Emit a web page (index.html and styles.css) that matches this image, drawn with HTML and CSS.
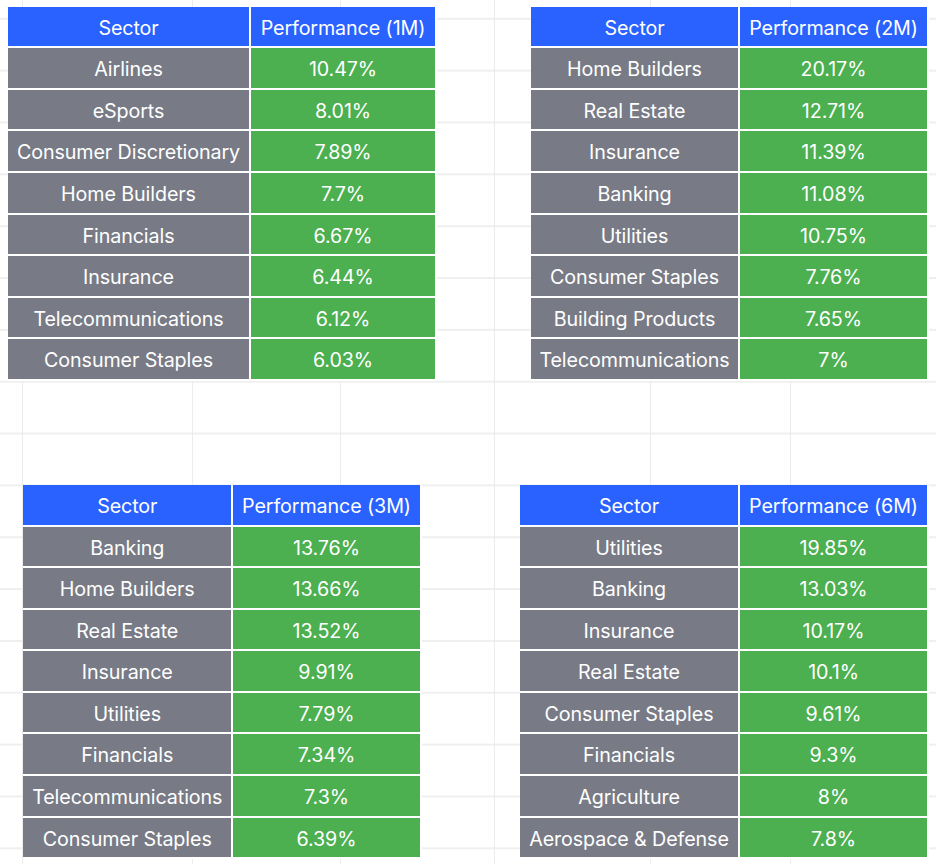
FILE: index.html
```html
<!DOCTYPE html>
<html lang="en">
<head>
<meta charset="utf-8">
<title>Sector Performance</title>
<link rel="stylesheet" href="styles.css">
</head>
<body>
<main class="board">
  <table class="perf t1">
    <colgroup><col class="c1"><col class="c2"></colgroup>
    <thead><tr><th>Sector</th><th>Performance (1M)</th></tr></thead>
    <tbody>
      <tr><td>Airlines</td><td>10.47%</td></tr>
      <tr><td>eSports</td><td>8.01%</td></tr>
      <tr><td>Consumer Discretionary</td><td>7.89%</td></tr>
      <tr><td>Home Builders</td><td>7.7%</td></tr>
      <tr><td>Financials</td><td>6.67%</td></tr>
      <tr><td>Insurance</td><td>6.44%</td></tr>
      <tr><td>Telecommunications</td><td>6.12%</td></tr>
      <tr><td>Consumer Staples</td><td>6.03%</td></tr>
    </tbody>
  </table>

  <table class="perf t2">
    <colgroup><col class="c1"><col class="c2"></colgroup>
    <thead><tr><th>Sector</th><th>Performance (2M)</th></tr></thead>
    <tbody>
      <tr><td>Home Builders</td><td>20.17%</td></tr>
      <tr><td>Real Estate</td><td>12.71%</td></tr>
      <tr><td>Insurance</td><td>11.39%</td></tr>
      <tr><td>Banking</td><td>11.08%</td></tr>
      <tr><td>Utilities</td><td>10.75%</td></tr>
      <tr><td>Consumer Staples</td><td>7.76%</td></tr>
      <tr><td>Building Products</td><td>7.65%</td></tr>
      <tr><td>Telecommunications</td><td>7%</td></tr>
    </tbody>
  </table>

  <table class="perf t3">
    <colgroup><col class="c1"><col class="c2"></colgroup>
    <thead><tr><th>Sector</th><th>Performance (3M)</th></tr></thead>
    <tbody>
      <tr><td>Banking</td><td>13.76%</td></tr>
      <tr><td>Home Builders</td><td>13.66%</td></tr>
      <tr><td>Real Estate</td><td>13.52%</td></tr>
      <tr><td>Insurance</td><td>9.91%</td></tr>
      <tr><td>Utilities</td><td>7.79%</td></tr>
      <tr><td>Financials</td><td>7.34%</td></tr>
      <tr><td>Telecommunications</td><td>7.3%</td></tr>
      <tr><td>Consumer Staples</td><td>6.39%</td></tr>
    </tbody>
  </table>

  <table class="perf t4">
    <colgroup><col class="c1"><col class="c2"></colgroup>
    <thead><tr><th>Sector</th><th>Performance (6M)</th></tr></thead>
    <tbody>
      <tr><td>Utilities</td><td>19.85%</td></tr>
      <tr><td>Banking</td><td>13.03%</td></tr>
      <tr><td>Insurance</td><td>10.17%</td></tr>
      <tr><td>Real Estate</td><td>10.1%</td></tr>
      <tr><td>Consumer Staples</td><td>9.61%</td></tr>
      <tr><td>Financials</td><td>9.3%</td></tr>
      <tr><td>Agriculture</td><td>8%</td></tr>
      <tr><td>Aerospace &amp; Defense</td><td>7.8%</td></tr>
    </tbody>
  </table>
</main>
</body>
</html>
```

FILE: styles.css
```css
html, body {
  margin: 0;
  padding: 0;
}

body {
  width: 936px;
  min-height: 864px;
  background-color: #ffffff;
  background-image:
    linear-gradient(#ececec, #ececec),
    linear-gradient(#ececec, #ececec),
    linear-gradient(#ececec, #ececec),
    linear-gradient(#ececec, #ececec),
    linear-gradient(#ececec, #ececec),
    linear-gradient(#ececec, #ececec),
    linear-gradient(to bottom, #efefef 0, #efefef 1.5px, transparent 1.5px);
  background-repeat: no-repeat, no-repeat, no-repeat, no-repeat, no-repeat, no-repeat, repeat-y;
  background-size: 1px 100%, 1px 100%, 1px 100%, 1px 100%, 1px 100%, 1px 100%, 100% 51.85px;
  background-position: 22px 0, 192px 0, 340px 0, 494px 0, 650px 0, 790px 0, 0 17.8px;
  font-family: Inter, "Liberation Sans", Arial, sans-serif;
}

.board {
  display: grid;
  grid-template-columns: 429px 409px;
  justify-content: space-between;
  row-gap: 103.9px;
  padding: 6.7px 7px 0 8px;
}

.perf {
  border-collapse: separate;
  border-spacing: 0;
  table-layout: fixed;
  color: #ffffff;
  font-size: 19.7px;
  letter-spacing: -0.1px;
}

.perf th,
.perf td {
  padding: 4px 0 0;
  height: 35.6px;
  line-height: 35.6px;
  text-align: center;
  font-weight: 400;
  white-space: nowrap;
  border-right: 2px solid #ffffff;
  border-bottom: 2px solid #ffffff;
  overflow: hidden;
}

.perf th {
  background: #2962ff;
}

.perf td:first-child {
  background: #787b86;
}

.perf td + td {
  background: #4caf50;
}

.t1 { justify-self: center; width: 429px; }
.t1 .c1 { width: 243px; }
.t1 .c2 { width: 186px; }

.t2 { justify-self: end; width: 398px; }
.t2 .c1 { width: 209px; }
.t2 .c2 { width: 189px; }

.t3 { justify-self: center; width: 398.5px; }
.t3 .c1 { width: 210px; }
.t3 .c2 { width: 188.5px; }

.t4 { justify-self: end; width: 409px; }
.t4 .c1 { width: 220px; }
.t4 .c2 { width: 189px; }
```
